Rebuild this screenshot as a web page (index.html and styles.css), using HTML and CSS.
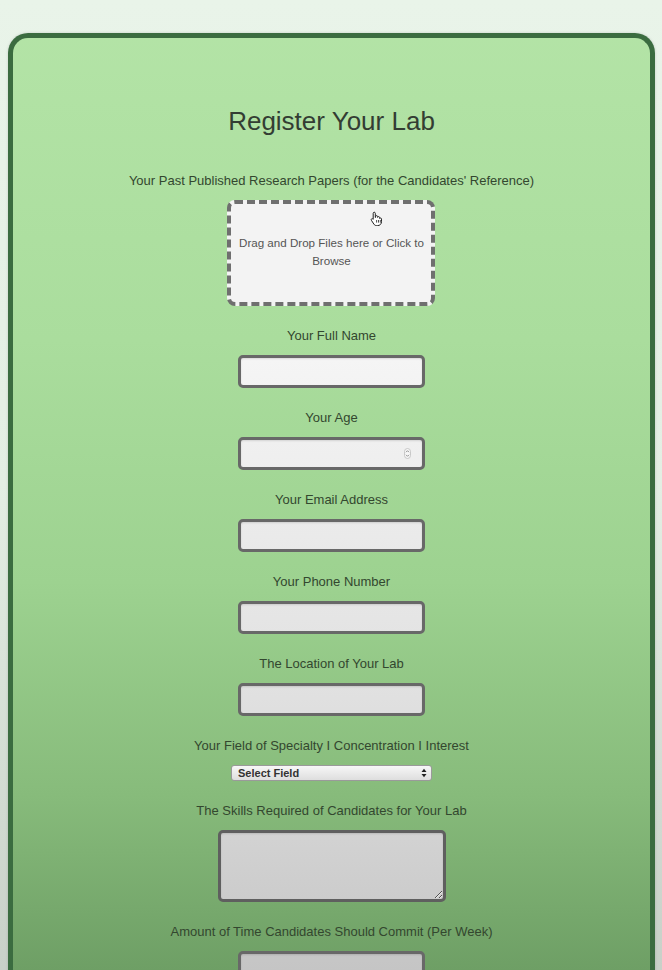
FILE: index.html
```html
<!DOCTYPE html>
<html lang="en">
<head>
<meta charset="utf-8">
<title>Register Your Lab</title>
<link rel="stylesheet" href="styles.css">
</head>
<body>
<main class="page">
  <section class="card">
    <h1 class="title">Register Your Lab</h1>
    <form class="form">
      <div class="field">
        <label class="label">Your Past Published Research Papers (for the Candidates' Reference)</label>
        <div class="dropzone">
          <span class="dropzone-text">Drag and Drop Files here or Click to Browse</span>
          <svg class="cursor" width="13" height="15" viewBox="0 0 13 15" aria-hidden="true">
            <path d="M4.2 1.2c.7 0 1.1.5 1.1 1.1v4.2l.3-.1V5.6c0-.6.5-1 1-1s1 .4 1 1v.8c.1-.5.5-.8 1-.8.6 0 1 .4 1 1v.9c.2-.3.5-.5.9-.5.6 0 1 .5 1 1.1v2.6c0 2.3-1.6 3.9-3.9 3.9H6.6c-1.3 0-2.1-.6-2.8-1.6L1.4 9.3c-.4-.6-.2-1.2.3-1.5.5-.3 1.1-.1 1.4.3l.1.2V2.3c0-.6.4-1.1 1-1.1z" fill="#fff" stroke="#222" stroke-width="1"/>
            <path d="M6.6 9v2.6M8.5 9v2.6M10.3 9v2.6" stroke="#222" stroke-width=".8"/>
          </svg>
        </div>
      </div>
      <div class="field">
        <label class="label">Your Full Name</label>
        <input class="input" type="text">
      </div>
      <div class="field">
        <label class="label">Your Age</label>
        <span class="input-wrap">
          <input class="input" type="number">
          <svg class="spinner" width="7" height="11" viewBox="0 0 7 11" aria-hidden="true">
            <rect x="0.5" y="0.5" width="6" height="10" rx="3" fill="#f6f6f6" stroke="#bdbdbd" stroke-width="0.8"/>
            <path d="M2 4.2 3.5 2.7 5 4.2M2 6.8 3.5 8.3 5 6.8" fill="none" stroke="#777" stroke-width="0.8"/>
          </svg>
        </span>
      </div>
      <div class="field">
        <label class="label">Your Email Address</label>
        <input class="input" type="email">
      </div>
      <div class="field">
        <label class="label">Your Phone Number</label>
        <input class="input" type="tel">
      </div>
      <div class="field">
        <label class="label">The Location of Your Lab</label>
        <input class="input" type="text">
      </div>
      <div class="field">
        <label class="label">Your Field of Specialty I Concentration I Interest</label>
        <span class="select-wrap">
          <select class="select">
            <option>Select Field</option>
          </select>
          <svg class="select-arrows" width="6" height="10" viewBox="0 0 6 10" aria-hidden="true">
            <path d="M0.5 4 3 0.8 5.5 4zM0.5 6 3 9.2 5.5 6z" fill="#222"/>
          </svg>
        </span>
      </div>
      <div class="field">
        <label class="label">The Skills Required of Candidates for Your Lab</label>
        <textarea class="textarea"></textarea>
      </div>
      <div class="field">
        <label class="label">Amount of Time Candidates Should Commit (Per Week)</label>
        <input class="input" type="text">
      </div>
    </form>
  </section>
</main>
</body>
</html>
```

FILE: styles.css
```css
html, body {
  margin: 0;
  padding: 0;
  height: 100%;
  overflow: hidden;
}

body {
  font-family: "Liberation Sans", Arial, Helvetica, sans-serif;
  background: linear-gradient(to bottom, #e9f4e9 0%, #e3eee3 50%, #c8d0c8 100%) fixed;
}

.page {
  padding: 33px 7px 0 8px;
}

.card {
  border: 5px solid #3b6c40;
  border-bottom-color: #2f5d34;
  border-radius: 20px;
  padding: 68px 0 40px;
  background: linear-gradient(to bottom, #b4e4a7 0%, #aadd9d 35%, #9dd290 60%, #87bb7b 82%, #6e9f65 100%) fixed;
  box-shadow: 0 0 3px rgba(0, 0, 0, 0.15);
}

.title {
  margin: 0 0 37px;
  text-align: center;
  font-size: 26px;
  line-height: 30px;
  font-weight: normal;
  color: #333d33;
}

.form {
  display: flex;
  flex-direction: column;
  align-items: center;
  gap: 22px;
}

.field {
  display: flex;
  flex-direction: column;
  align-items: center;
}

.label {
  display: block;
  font-size: 13px;
  line-height: 15px;
  color: #33472f;
  margin-bottom: 12px;
}

.dropzone {
  position: relative;
  box-sizing: border-box;
  width: 208px;
  height: 106px;
  padding: 30px 7px;
  border: 4px dashed #6f6f6f;
  border-radius: 8px;
  background: #f3f3f3;
  text-align: center;
  font-size: 11.6px;
  line-height: 18px;
  color: #555;
}

.cursor {
  position: absolute;
  left: 139px;
  top: 7px;
}

.input-wrap,
.select-wrap {
  position: relative;
  display: block;
}

.input {
  display: block;
  box-sizing: border-box;
  width: 187px;
  height: 33px;
  margin: 0;
  padding: 4px 8px;
  border: 3px solid #686868;
  border-radius: 5px;
  background: linear-gradient(to bottom, #fafafa 0%, #f5f5f5 37%, #e0e0e0 72%, #c5c5c5 100%) fixed;
  box-shadow: inset 0 1px 2px rgba(0, 0, 0, 0.12);
  font-family: inherit;
  font-size: 13px;
  -moz-appearance: textfield;
  appearance: textfield;
}

.input::-webkit-inner-spin-button,
.input::-webkit-outer-spin-button {
  -webkit-appearance: none;
  margin: 0;
}

.spinner {
  position: absolute;
  right: 14px;
  top: 11px;
}

.select {
  display: block;
  box-sizing: border-box;
  width: 201px;
  height: 16px;
  margin: 0;
  padding: 0 0 0 6px;
  border: 1px solid #9a9a9a;
  border-radius: 3px;
  background: linear-gradient(to bottom, #f7f7f7, #dedede);
  font-family: inherit;
  font-size: 11px;
  line-height: 14px;
  font-weight: bold;
  color: #333;
  -webkit-appearance: none;
  appearance: none;
}

.select-arrows {
  position: absolute;
  right: 5px;
  top: 3px;
  pointer-events: none;
}

.textarea {
  display: block;
  box-sizing: border-box;
  width: 228px;
  height: 72px;
  margin: 0;
  padding: 4px;
  border: 3px solid #5f5f5f;
  border-radius: 5px;
  background: linear-gradient(to bottom, #fafafa 0%, #f5f5f5 37%, #e0e0e0 72%, #c5c5c5 100%) fixed;
  box-shadow: inset 0 1px 2px rgba(0, 0, 0, 0.12);
  font-family: inherit;
}
```
